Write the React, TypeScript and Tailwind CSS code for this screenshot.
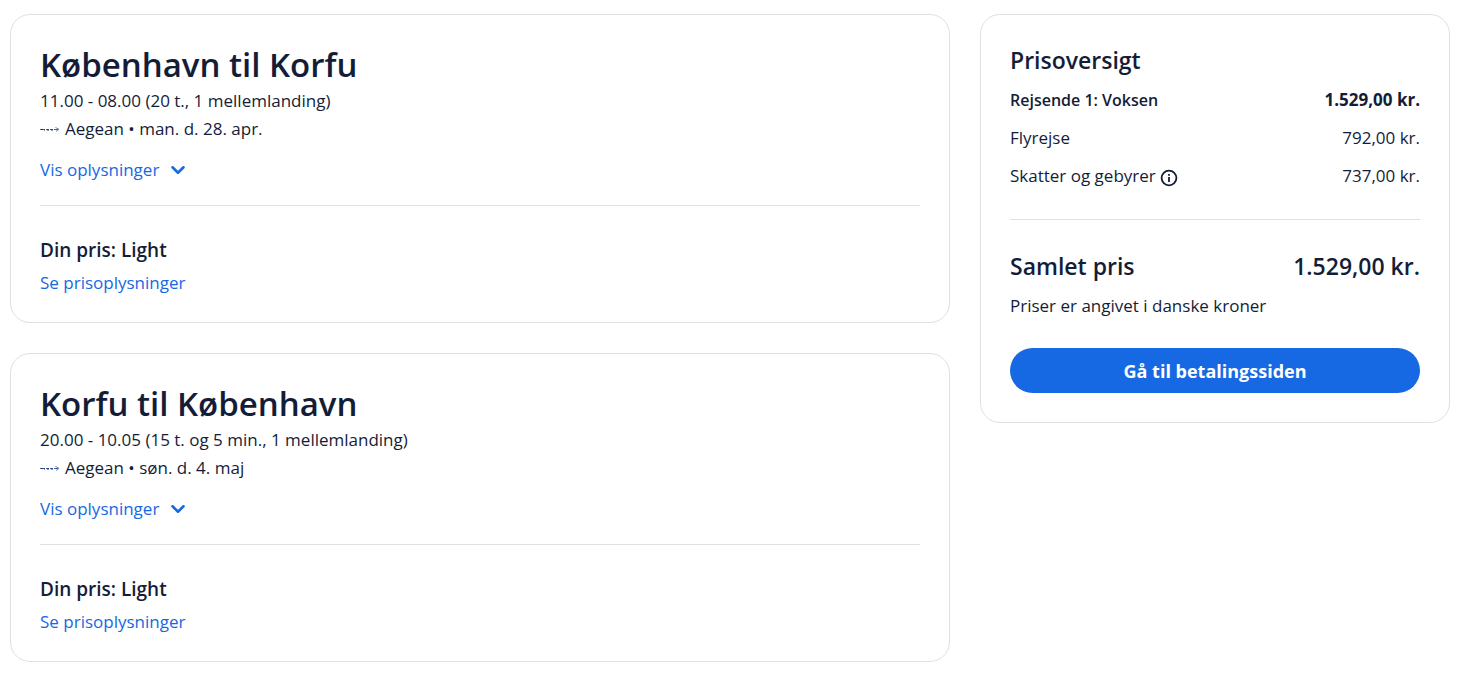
import { ChevronDown } from 'lucide-react'

type Flight = {
  title: string
  time: string
  airline: string
  date: string
  fare: string
}

const flights: Flight[] = [
  {
    title: 'København til Korfu',
    time: '11.00 - 08.00 (20 t., 1 mellemlanding)',
    airline: 'Aegean',
    date: 'man. d. 28. apr.',
    fare: 'Light',
  },
  {
    title: 'Korfu til København',
    time: '20.00 - 10.05 (15 t. og 5 min., 1 mellemlanding)',
    airline: 'Aegean',
    date: 'søn. d. 4. maj',
    fare: 'Light',
  },
]

function AirlineLogo() {
  return (
    <svg width="20" height="20" viewBox="0 0 20 20" fill="none" aria-hidden="true">
      <path d="M0 10.5h5M6 10.5h3M10 10.5h3M14 10.5h4" stroke="#4a639c" strokeWidth="1.2" />
      <path d="M1 10.5h2M4 11h1M7 11h2M11 11h2" stroke="#1b2f66" strokeWidth="1.2" />
      <path d="M15.5 8.5l3.5 1.8-3 2.2" stroke="#6f88bb" strokeWidth="1" />
    </svg>
  )
}

function InfoIcon() {
  return (
    <svg width="18" height="18" viewBox="0 0 18 18" fill="none" aria-hidden="true">
      <circle cx="9" cy="9" r="7.4" stroke="#141d38" strokeWidth="1.8" />
      <path d="M9 8v5M9 5v1.8" stroke="#141d38" strokeWidth="1.8" />
    </svg>
  )
}

function FlightCard({ flight }: { flight: Flight }) {
  return (
    <article className="rounded-[20px] border border-[#dfe0e4] px-[29px] pt-7 pb-[25px]">
      <h2 className="text-[33px] leading-[44px] font-semibold">{flight.title}</h2>
      <p>{flight.time}</p>
      <p className="flex items-center gap-[5px]">
        <AirlineLogo />
        <span>
          {flight.airline} • {flight.date}
        </span>
      </p>
      <button type="button" className="mt-[13px] flex items-center gap-2 text-[#1668e3]">
        Vis oplysninger
        <ChevronDown size={22} strokeWidth={2.8} />
      </button>
      <hr className="mt-[21px] border-[#dfe0e4]" />
      <h3 className="mt-[30px] text-[19px] leading-7 font-semibold">Din pris: {flight.fare}</h3>
      <a href="#" className="mt-[5px] block w-fit text-[#1668e3]">
        Se prisoplysninger
      </a>
    </article>
  )
}

function PriceSummary() {
  return (
    <aside className="rounded-[20px] border border-[#dfe0e4] p-[29px]">
      <h2 className="text-[23px] leading-8 font-semibold">Prisoversigt</h2>
      <dl className="mt-2.5 flex flex-col gap-2.5">
        <div className="flex justify-between">
          <dt className="text-[16px] leading-7 font-semibold">Rejsende 1: Voksen</dt>
          <dd className="font-bold">1.529,00 kr.</dd>
        </div>
        <div className="flex justify-between">
          <dt>Flyrejse</dt>
          <dd>792,00 kr.</dd>
        </div>
        <div className="flex justify-between">
          <dt className="flex items-center gap-1">
            Skatter og gebyrer
            <button type="button" aria-label="Skatter og gebyrer" className="pt-1">
              <InfoIcon />
            </button>
          </dt>
          <dd>737,00 kr.</dd>
        </div>
      </dl>
      <hr className="mt-[29px] border-[#dfe0e4]" />
      <div className="mt-[30px] flex justify-between text-[23px] leading-8 font-semibold">
        <span>Samlet pris</span>
        <span>1.529,00 kr.</span>
      </div>
      <p className="mt-2.5">Priser er angivet i danske kroner</p>
      <button
        type="button"
        className="mt-7 h-[45px] w-full rounded-full bg-[#1668e3] text-[18px] font-bold text-white"
      >
        Gå til betalingssiden
      </button>
    </aside>
  )
}

export default function App() {
  return (
    <main className="grid grid-cols-[2fr_1fr] items-start gap-[30px] bg-white px-2.5 py-3.5 font-['Open_Sans','Noto_Sans',sans-serif] text-[17px] leading-7 text-[#141d38]">
      <div className="flex flex-col gap-[30px]">
        {flights.map((flight) => (
          <FlightCard key={flight.title} flight={flight} />
        ))}
      </div>
      <PriceSummary />
    </main>
  )
}
